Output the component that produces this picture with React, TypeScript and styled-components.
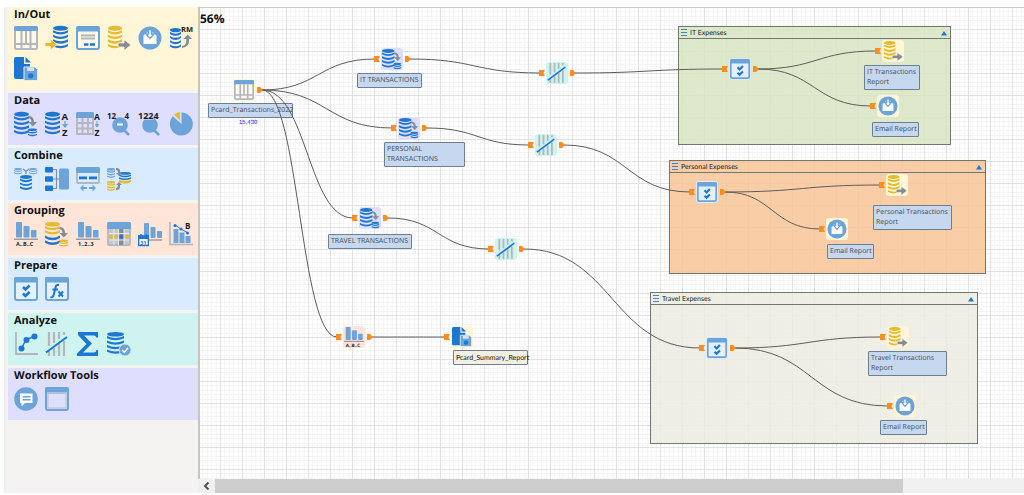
import React from "react";
import styled, { createGlobalStyle } from "styled-components";

const BLUE = "#1d76d2";
const LIGHT = "#6ca3d9";
const GOLD = "#e6ba28";
const SILVER = "#b3b6be";
const STEEL = "#878a97";
const INK = "#1c1c1c";

const GlobalStyle = createGlobalStyle`
  * { box-sizing: border-box; }
  body {
    margin: 0;
    background: #fff;
    font-family: "Open Sans", "Noto Sans", sans-serif;
    text-rendering: geometricPrecision;
  }
`;

const Shell = styled.div`
  display: flex;
  min-height: 100vh;
  padding: 7px 0 2px 4px;
`;

const Palette = styled.aside`
  flex: none;
  width: 194px;
  display: flex;
  flex-direction: column;
  gap: 3px;
  padding-left: 2px;
  border-left: 2px solid #efeff0;
  background: #f4f3f1;
`;

const Section = styled.section<{ $tint: string }>`
  padding: 0 4px 9px 6px;
  background: ${(p) => p.$tint};
`;

const SectionTitle = styled.h2`
  margin: 0;
  padding-bottom: 3px;
  font-size: 11px;
  line-height: 16px;
  font-weight: 700;
  color: #111;
`;

const ToolRow = styled.div`
  display: flex;
  flex-wrap: wrap;
  gap: 7px;
`;

const ToolButton = styled.button`
  display: block;
  width: 24px;
  height: 24px;
  padding: 0;
  border: 0;
  background: none;
`;

const Workspace = styled.main`
  flex: 1;
  min-width: 0;
  display: flex;
  flex-direction: column;
`;

const Canvas = styled.div`
  position: relative;
  flex: 1;
  overflow: hidden;
  border-top: 1px solid #cfccc5;
  border-left: 2px solid #c9c5bc;
  background: #fff;
`;

const Backdrop = styled.svg`
  position: absolute;
  inset: 0;
  width: 100%;
  height: 100%;
`;

const Zoom = styled.output`
  position: relative;
  display: block;
  padding-top: 3px;
  font-size: 12px;
  line-height: 16px;
  font-weight: 700;
  color: #111;
`;

const Frame = styled.section<{ $x: number; $y: number; $w: number; $h: number; $tint: string }>`
  position: absolute;
  left: ${(p) => p.$x}px;
  top: ${(p) => p.$y}px;
  width: ${(p) => p.$w}px;
  height: ${(p) => p.$h}px;
  border: 1px solid #74776f;
  background: ${(p) => p.$tint};
`;

const FrameHeader = styled.header`
  display: flex;
  align-items: center;
  gap: 3px;
  height: 12px;
  padding: 0 2px;
  border-bottom: 1px solid #74776f;
`;

const FrameTitle = styled.h3`
  flex: 1;
  margin: 0;
  font-family: Lato, sans-serif;
  font-size: 7px;
  line-height: 10px;
  font-weight: 400;
  color: #222;
`;

const CollapseButton = styled.button`
  display: block;
  width: 8px;
  height: 8px;
  padding: 0;
  border: 0;
  background: none;
`;

const NodeBox = styled.div<{ $x: number; $y: number }>`
  position: absolute;
  left: ${(p) => p.$x}px;
  top: ${(p) => p.$y}px;
  display: flex;
  align-items: center;
`;

const Port = styled.span`
  display: block;
  width: 6px;
  height: 6px;
`;

const Tile = styled.span<{ $tint: string }>`
  display: block;
  width: 22px;
  height: 22px;
  margin: 0 2px 0 1px;
  padding: 1px;
  border-radius: 3px;
  background: ${(p) => p.$tint};
`;

const Caption = styled.div<{ $x: number; $y: number; $w: number; $plain?: boolean }>`
  position: absolute;
  left: ${(p) => p.$x}px;
  top: ${(p) => p.$y}px;
  width: ${(p) => p.$w}px;
  padding: 2px 0 1px 2px;
  border: 1px solid #6f7f90;
  border-radius: 1px;
  background: ${(p) => (p.$plain ? "#efefe3" : "#c5d8f0")};
  color: ${(p) => (p.$plain ? "#111" : "#484d53")};
  font-family: ${(p) => (p.$plain ? "Lato" : '"Open Sans"')}, sans-serif;
  font-size: 7px;
  line-height: 10px;
  white-space: pre;
`;

const RowCount = styled.div<{ $x: number; $y: number }>`
  position: absolute;
  left: ${(p) => p.$x}px;
  top: ${(p) => p.$y}px;
  font-family: "Liberation Sans", sans-serif;
  font-size: 6px;
  line-height: 8px;
  color: #1010ff;
`;

const ScrollBar = styled.div`
  display: flex;
  height: 14px;
  background: #f0f0f0;
`;

const ScrollButton = styled.button`
  display: flex;
  align-items: center;
  justify-content: center;
  width: 17px;
  padding: 0;
  border: 0;
  background: none;
`;

const ScrollTrack = styled.div`
  flex: 1;
`;

const ScrollThumb = styled.div`
  width: 85%;
  height: 100%;
  background: #cdcdcd;
`;

const Glyph = styled.svg`
  display: block;
  width: 100%;
  height: 100%;
  overflow: visible;
`;

type StackProps = { x: number; y: number; w: number; n: number; color: string; step?: number };

const Stack = ({ x, y, w, n, color, step = 4.4 }: StackProps) => {
  const t = step * 0.5;
  const c = step * 0.55;
  return (
    <g fill={color}>
      <ellipse cx={x + w / 2} cy={y + c * 0.9} rx={w / 2} ry={c * 0.95} />
      {Array.from({ length: n }, (_, i) => {
        const top = y + step * (i + 0.9);
        return (
          <path key={i} d={`M${x} ${top}q${w / 2} ${c * 1.6} ${w} 0v${t}q${-w / 2} ${c * 1.6} ${-w} 0z`} />
        );
      })}
    </g>
  );
};

const Bars = ({ x = 2, y = 0 }: { x?: number; y?: number }) => (
  <g fill={LIGHT} transform={`translate(${x} ${y})`}>
    <rect width="6" height="15.500" rx="1" />
    <rect x="7.500" y="4" width="6" height="11.500" rx="1" />
    <rect x="15" y="8" width="5.500" height="7.500" rx="1" />
  </g>
);

const WindowFrame = ({ fill = "none" }: { fill?: string }) => (
  <>
    <rect x="1" y="1" width="22" height="22" rx="2" fill={fill} stroke={LIGHT} strokeWidth="2" />
    <path d="M0 5.500V2q0-2 2-2h20q2 0 2 2v3.500z" fill={LIGHT} />
  </>
);

const letters = { fontFamily: "Open Sans, sans-serif", fontWeight: 700, fill: INK };

const icons: Record<string, React.ReactNode> = {
  table: (
    <>
      <rect x="1" y="2" width="22" height="21" rx="1.500" fill="#ffffff66" stroke={SILVER} strokeWidth="2" />
      <path d="M7.500 5v13M12 5v13M16.500 5v13M1 18h22M7.500 18v5M16.500 18v5" stroke={SILVER} strokeWidth="2" />
      <path d="M0 5V1.500Q0 0 1.500 0h21Q24 0 24 1.500V5z" fill={LIGHT} />
    </>
  ),
  dbIn: (
    <>
      <Stack x={8} y={0} w={15} n={4} color={BLUE} step={4.6} />
      <path d="M0 16.500h5.500V13l6.500 5.500L5.500 24v-3.500H0z" fill={GOLD} stroke="#fff5d9" strokeWidth=".8" />
    </>
  ),
  form: (
    <>
      <rect x="1" y="1" width="22" height="22" rx="2" fill="#ffffff55" stroke={LIGHT} strokeWidth="2" />
      <path d="M0 5.500V2q0-2 2-2h20q2 0 2 2v3.500z" fill={LIGHT} />
      <path d="M5 9.500h14M5 12.500h14" stroke={SILVER} strokeWidth="1.800" />
      <path d="M8 18.500h4.500M14 18.500h5" stroke={BLUE} strokeWidth="2.400" />
    </>
  ),
  dbOut: (
    <>
      <Stack x={1} y={0} w={14} n={4} color={GOLD} step={4.6} />
      <path d="M11 17h6v-3.500l7 5.500-7 5.500V21h-6z" fill={STEEL} stroke="#fff5d9" strokeWidth=".8" />
    </>
  ),
  email: (
    <>
      <circle cx="12" cy="12" r="11.500" fill={LIGHT} />
      <path d="M5.500 9.500L9 6.500h6l3.500 3V18h-13z" fill="#fff" />
      <path d="M10.500 3.500h3v4.500H16l-4 4.500L8 8h2.500z" fill="#fff" stroke={LIGHT} strokeWidth="1.400" />
    </>
  ),
  rm: (
    <>
      <Stack x={1} y={2} w={11} n={4} color={BLUE} step={4.2} />
      <path d="M13 20q5 0 4.200-7h-3l4.500-4.500L23 13h-3q.8 8-7 9z" fill={STEEL} />
      <text x="12" y="5.500" fontSize="7.500" {...letters}>RM</text>
    </>
  ),
  report: (
    <>
      <path d="M0 2q0-2 2-2h8v7h6v15H2q-2 0-2-2z" fill={BLUE} />
      <path d="M11.500 0v5.500H17z" fill={BLUE} />
      <path d="M10 10h11l2.500 2.500V23.500H10z" fill={LIGHT} stroke="#e8efe9" strokeWidth="1" />
      <rect x="13" y="10.500" width="7" height="3.500" fill="#d5e4ee" />
      <circle cx="16.800" cy="18.800" r="2.600" fill={BLUE} />
    </>
  ),
  dbMove: (
    <>
      <Stack x={0} y={0} w={15} n={4} color={BLUE} step={4.6} />
      <path d="M15 4q5 .5 5 6h3l-4.200 4.500L14.500 10h3q0-3.500-3-4z" fill={STEEL} />
      <Stack x={14} y={16.500} w={9} n={2} color={BLUE} step={2.700} />
    </>
  ),
  dbSort: (
    <>
      <Stack x={0} y={0} w={15} n={4} color={BLUE} step={4.600} />
      <text x="16.500" y="8" fontSize="9.500" {...letters}>A</text>
      <text x="17" y="24" fontSize="9.500" {...letters}>Z</text>
      <path d="M20 9v4M18 12.500l2 2.500 2-2.500z" fill={LIGHT} stroke={LIGHT} strokeWidth="1.200" />
    </>
  ),
  tableSort: (
    <>
      <path d="M1 5v17h16V5M1 11h16M1 16.500h16M6.500 5v17M12 5v17" fill="none" stroke={SILVER} strokeWidth="1.800" />
      <path d="M0 6V1.500Q0 0 1.500 0h15Q18 0 18 1.500V6z" fill={LIGHT} />
      <text x="18" y="8" fontSize="8.500" {...letters}>A</text>
      <text x="18.500" y="24" fontSize="8.500" {...letters}>Z</text>
      <path d="M21 9v4M19.500 12.500l1.500 2.500 1.500-2.500z" fill={LIGHT} stroke={LIGHT} />
    </>
  ),
  gaps: (
    <>
      <path d="M17 18l5 5" stroke={LIGHT} strokeWidth="2.500" />
      <circle cx="13" cy="13" r="7.800" fill={LIGHT} />
      <path d="M10 12.500h6" stroke="#fff" strokeWidth="2" />
      <text x="0" y="6.500" fontSize="8" {...letters}>12</text>
      <text x="17.500" y="6.500" fontSize="8" {...letters}>4</text>
    </>
  ),
  duplicates: (
    <>
      <path d="M16 18l5 5" stroke={LIGHT} strokeWidth="2.500" />
      <circle cx="12" cy="13" r="7.800" fill={LIGHT} />
      <text x="0" y="7" fontSize="9" stroke="#dedeff" strokeWidth="1" paintOrder="stroke" {...letters}>1224</text>
    </>
  ),
  pie: (
    <>
      <path d="M12.500 0.500A11.500 11.500 0 1 1 3.800 4.300L12.500 12z" fill={LIGHT} />
      <path d="M5 2.500Q8 0 11 0v8.500z" fill={GOLD} />
    </>
  ),
  join: (
    <>
      <Stack x={0} y={1} w={8} n={2} color={LIGHT} step={2.200} />
      <Stack x={15} y={1} w={8} n={2} color={LIGHT} step={2.200} />
      <path d="M9 2l3 2.500L15 2M12 4.500V7" fill="none" stroke={STEEL} strokeWidth="1.200" />
      <Stack x={6} y={8} w={12} n={3} color={BLUE} step={3.900} />
    </>
  ),
  append: (
    <>
      <path d="M6 2.500h5.500v19H6M6 12h9" fill="none" stroke={STEEL} strokeWidth="1.200" />
      <g fill={BLUE}>
        <rect width="8" height="5.500" rx="1" />
        <rect y="9.300" width="8" height="5.500" rx="1" />
        <rect y="18.500" width="8" height="5.500" rx="1" />
      </g>
      <rect x="14" y="1.500" width="10" height="21" rx="1.500" fill={LIGHT} />
    </>
  ),
  relate: (
    <>
      <rect x="1" y="1" width="22" height="15" rx="1" fill="none" stroke={SILVER} strokeWidth="1.800" />
      <path d="M0 6V1.500Q0 0 1.500 0h21Q24 0 24 1.500V6z" fill={LIGHT} />
      <path d="M3 10.800h8M13 10.800h8" stroke={BLUE} strokeWidth="2.800" />
      <path d="M4 21l3.500-3.500v2.500H11v2H7.500v2.500zM20 21l-3.500-3.500v2.500H13v2h3.500v2.500z" fill={LIGHT} />
    </>
  ),
  merge: (
    <>
      <Stack x={0} y={1} w={8} n={3} color={LIGHT} step={2.600} />
      <Stack x={0} y={14} w={8} n={3} color={GOLD} step={2.600} />
      <Stack x={12} y={5} w={12} n={2} color={BLUE} step={2.800} />
      <path d="M12 12.500q6 3 12 0v2.500q-6 3-12 0z" fill={GOLD} />
      <path d="M9 1q5 0 4 5h2l-3 3-3-3h2q0-3-2-3zM9 23q5 0 4-5h2l-3-3-3 3h2q0 3-2 3z" fill={STEEL} />
    </>
  ),
  groupAbc: (
    <>
      <Bars />
      <path d="M0 17.200h24" stroke={STEEL} strokeWidth="1.200" />
      <text x="2" y="23.500" fontSize="5.500" {...letters}>A..B..C</text>
    </>
  ),
  groupDb: (
    <>
      <Stack x={0} y={0} w={15} n={2} color={GOLD} step={4.400} />
      <path d="M0 13.500q7.500 4.500 15 0v2.400q-7.500 4.500-15 0zM0 18.300q7.500 4.500 15 0v2.400q-7.500 4.500-15 0z" fill={BLUE} />
      <path d="M15 5q5 .5 5 6h3l-4.200 4.500L14.500 11h3q0-3.500-3-4z" fill={STEEL} />
      <Stack x={14} y={17.500} w={9} n={2} color={GOLD} step={2.500} />
    </>
  ),
  group123: (
    <>
      <Bars />
      <path d="M0 17.200h24" stroke={STEEL} strokeWidth="1.200" />
      <text x="2" y="23.500" fontSize="5.500" {...letters}>1..2..3</text>
    </>
  ),
  pivot: (
    <>
      <rect x="1" y="1" width="22" height="22" rx="1" fill="#c3c6cb" stroke={SILVER} strokeWidth="1.800" />
      <rect x="11.500" y="6" width="5.500" height="17" fill={STEEL} />
      <path d="M2 11.500h20M2 18h20M6.800 6v17M11.500 6v17M17 6v17" stroke="#eee" strokeWidth=".9" />
      <path d="M0 7V1.500Q0 0 1.500 0h21Q24 0 24 1.500V7z" fill={LIGHT} />
      <g fill={GOLD}>
        <circle cx="4" cy="14.800" r="2" />
        <circle cx="9.200" cy="14.800" r="2" />
        <circle cx="20" cy="14.800" r="2" />
      </g>
      <circle cx="14.300" cy="14.800" r="2" fill={BLUE} />
    </>
  ),
  groupDate: (
    <>
      <g transform="translate(6 1)" fill={LIGHT}>
        <rect width="5" height="15" rx="1" />
        <rect x="6.500" y="4" width="5" height="11" rx="1" />
        <rect x="13" y="8" width="5" height="7" rx="1" />
      </g>
      <path d="M11 18h13" stroke={STEEL} strokeWidth="1.200" />
      <rect x=".7" y="14" width="9.600" height="9.500" fill="#fff" stroke={BLUE} strokeWidth="1.400" />
      <path d="M0 13.500h11V17H0z" fill={BLUE} />
      <path d="M3 12v2M8 12v2" stroke={BLUE} strokeWidth="1.400" />
      <text x="2.200" y="22.500" fontSize="5.500" {...letters} fill={BLUE}>31</text>
    </>
  ),
  benford: (
    <>
      <path d="M1 0v22.500h23" fill="none" stroke={SILVER} strokeWidth="1.600" />
      <g fill={LIGHT}>
        <rect x="4.500" y="7" width="5" height="14" />
        <rect x="10.500" y="10.500" width="5" height="10.500" />
        <rect x="16.500" y="14" width="5" height="7" />
      </g>
      <path d="M6 3l6 4 7 4" fill="none" stroke={BLUE} />
      <g fill={BLUE}>
        <circle cx="6" cy="3.500" r="1.500" />
        <circle cx="12" cy="7" r="1.500" />
        <circle cx="18.500" cy="11" r="1.500" />
      </g>
      <text x="16" y="6.500" fontSize="8" {...letters}>B</text>
    </>
  ),
  check: (
    <>
      <WindowFrame fill="#e3f0fd" />
      <path d="M9 10l2.500 2.500L15.500 8.500M9 16.500l2.500 2.500L15.500 15" fill="none" stroke={BLUE} strokeWidth="2.600" />
    </>
  ),
  formula: (
    <>
      <WindowFrame fill="#e3f0fd" />
      <path d="M5.500 20q2.500.8 3.300-2.500l1.700-7Q11.300 7.300 14 8M7.500 12.500h5.500" fill="none" stroke={BLUE} strokeWidth="2" />
      <path d="M13.500 14.500l4.500 5M18 14.500l-4.500 5" stroke={BLUE} strokeWidth="2" />
    </>
  ),
  trend: (
    <>
      <path d="M2 0v22h22" fill="none" stroke={SILVER} strokeWidth="1.800" />
      <path d="M7.500 16.500l4.500-9 8.500-3" fill="none" stroke={BLUE} strokeWidth="1.400" />
      <g fill={BLUE}>
        <circle cx="7.500" cy="16.500" r="3" />
        <circle cx="12.500" cy="8" r="3" />
        <circle cx="20.500" cy="4.500" r="3" />
      </g>
    </>
  ),
  sample: (
    <>
      <path d="M4 0v14M4 19v5M9 0v11M9 16v8M14 0v7M14 12v12M19 0v3M19 9v15" stroke={SILVER} strokeWidth="2.200" />
      <path d="M1 20.500L22 5" stroke={BLUE} strokeWidth="2" />
    </>
  ),
  sum: (
    <path d="M2 0h20v5.500h-1.800q-.4-2-2.200-2H8l8 8-9 9h11q2 0 2.500-2.500H22V24H1v-2.500l9.500-9.500L2 3z" fill={BLUE} />
  ),
  dbCheck: (
    <>
      <Stack x={0} y={0} w={17} n={4} color={BLUE} step={4.500} />
      <circle cx="18" cy="18" r="6" fill={LIGHT} stroke="#d0f3ee" strokeWidth=".8" />
      <path d="M15 18l2.300 2.200L21 16" fill="none" stroke="#fff" strokeWidth="1.500" />
    </>
  ),
  comment: (
    <>
      <circle cx="12" cy="12" r="11.800" fill={LIGHT} />
      <path d="M6 6.500h12.500V16H11l-3.500 3.500V16H6z" fill="#fff" />
      <path d="M8.500 9.800h8M8.500 12.800h8" stroke={LIGHT} strokeWidth="1.400" />
    </>
  ),
  container: (
    <>
      <WindowFrame />
      <rect x="3" y="6.500" width="18" height="14.500" fill="none" stroke={SILVER} strokeWidth=".8" />
    </>
  ),
};

const Icon = ({ name }: { name: string }) => (
  <Glyph viewBox="0 0 24 24" aria-hidden="true">{icons[name]}</Glyph>
);

const sections = [
  { title: "In/Out", tint: "#fff5d7", tools: ["table", "dbIn", "form", "dbOut", "email", "rm", "report"] },
  { title: "Data", tint: "#dedeff", tools: ["dbMove", "dbSort", "tableSort", "gaps", "duplicates", "pie"] },
  { title: "Combine", tint: "#d9ebfe", tools: ["join", "append", "relate", "merge"] },
  { title: "Grouping", tint: "#fee5d8", tools: ["groupAbc", "groupDb", "group123", "pivot", "groupDate", "benford"] },
  { title: "Prepare", tint: "#d9ebfe", tools: ["check", "formula"] },
  { title: "Analyze", tint: "#cff4ef", tools: ["trend", "sample", "sum", "dbCheck"] },
  { title: "Workflow Tools", tint: "#dedeff", tools: ["comment", "container"] },
];

const frames = [
  { title: "IT Expenses", x: 478, y: 18, w: 273, h: 119, tint: "rgba(216, 228, 193, .85)" },
  { title: "Personal Expenses", x: 469, y: 152, w: 317, h: 114, tint: "rgba(248, 197, 152, .85)" },
  { title: "Travel Expenses", x: 450, y: 284, w: 328, h: 152, tint: "rgba(236, 236, 225, .85)" },
];

const tints: Record<string, string> = {
  table: "#fff5d7", dbMove: "#dedeff", sample: "#cff4ef", check: "#d9ebfe",
  dbOut: "#fff5d7", email: "#fff5d7", groupAbc: "#fee5d8", report: "#fff5d7",
};

type NodeSpec = { icon: string; x: number; y: number; input?: boolean; output?: boolean };

/* x and y are the centre of the tile on the canvas */
const nodes: NodeSpec[] = [
  { icon: "table", x: 44, y: 82, output: true },
  { icon: "dbMove", x: 192, y: 51, input: true, output: true },
  { icon: "dbMove", x: 209, y: 120, input: true, output: true },
  { icon: "dbMove", x: 170, y: 210, input: true, output: true },
  { icon: "groupAbc", x: 154, y: 329, input: true, output: true },
  { icon: "report", x: 262, y: 329, input: true },
  { icon: "sample", x: 357, y: 65, input: true, output: true },
  { icon: "sample", x: 346, y: 137, input: true, output: true },
  { icon: "sample", x: 306, y: 241, input: true, output: true },
  { icon: "check", x: 540, y: 61, input: true, output: true },
  { icon: "dbOut", x: 693, y: 43, input: true },
  { icon: "email", x: 688, y: 98, input: true },
  { icon: "check", x: 507, y: 184, input: true, output: true },
  { icon: "dbOut", x: 697, y: 177, input: true },
  { icon: "email", x: 637, y: 221, input: true },
  { icon: "check", x: 517, y: 340, input: true, output: true },
  { icon: "dbOut", x: 698, y: 329, input: true },
  { icon: "email", x: 705, y: 398, input: true },
];

const links: [number, number][] = [
  [0, 1], [0, 2], [0, 3], [0, 4], [1, 6], [2, 7], [3, 8], [4, 5], [6, 9], [7, 12], [8, 15],
  [9, 10], [9, 11], [12, 13], [12, 14], [15, 16], [15, 17],
];

const captions = [
  { text: "Pcard_Transactions_2022", x: 8, y: 95, w: 85 },
  { text: "IT TRANSACTIONS", x: 157, y: 65, w: 65 },
  { text: "PERSONAL\nTRANSACTIONS", x: 184, y: 134, w: 81 },
  { text: "TRAVEL TRANSACTIONS", x: 128, y: 226, w: 84 },
  { text: "Pcard_Summary_Report", x: 253, y: 342, w: 75, plain: true },
  { text: "IT Transactions\nReport", x: 664, y: 57, w: 56 },
  { text: "Email Report", x: 672, y: 114, w: 47 },
  { text: "Personal Transactions\nReport", x: 673, y: 197, w: 79 },
  { text: "Email Report", x: 627, y: 236, w: 47 },
  { text: "Travel Transactions\nReport", x: 668, y: 343, w: 79 },
  { text: "Email Report", x: 680, y: 412, w: 47 },
];

const linkPath = (from: NodeSpec, to: NodeSpec) => {
  const x1 = from.x + 18;
  const x2 = to.x - 17;
  const mid = (x1 + x2) / 2;
  return `M${x1} ${from.y}C${mid} ${from.y} ${mid} ${to.y} ${x2} ${to.y}`;
};

const ToolSection = ({ title, tint, tools }: (typeof sections)[number]) => (
  <Section $tint={tint}>
    <SectionTitle>{title}</SectionTitle>
    <ToolRow>
      {tools.map((tool) => (
        <ToolButton key={tool} type="button" aria-label={tool}>
          <Icon name={tool} />
        </ToolButton>
      ))}
    </ToolRow>
  </Section>
);

const FlowNode = ({ icon, x, y, input, output }: NodeSpec) => (
  <NodeBox $x={x - 18} $y={y - 11}>
    <Port>
      {input && (
        <Glyph viewBox="0 0 6 6"><path d="M0 0h6L4.500 3 6 6H0z" fill="#ff8c1e" /></Glyph>
      )}
    </Port>
    <Tile $tint={tints[icon]}><Icon name={icon} /></Tile>
    <Port>
      {output && (
        <Glyph viewBox="0 0 6 6"><path d="M0 0h3l3 3-3 3H0z" fill="#ff8c1e" /></Glyph>
      )}
    </Port>
  </NodeBox>
);

export default function App() {
  return (
    <>
      <GlobalStyle />
      <Shell>
        <Palette>
          {sections.map((s) => <ToolSection key={s.title} {...s} />)}
        </Palette>
        <Workspace>
          <Canvas>
            <Backdrop aria-hidden="true">
              <defs>
                <pattern id="grid" x="20" y="21" width="22" height="22" patternUnits="userSpaceOnUse">
                  <path d="M4.500 0v22M9.500 0v22M13.500 0v22M18.500 0v22M0 4.500h22M0 9.500h22M0 13.500h22M0 18.500h22" stroke="#f5f5f5" />
                  <path d="M.5 0v22M0 .5h22" stroke="#e2e2e2" />
                </pattern>
              </defs>
              <rect width="100%" height="100%" fill="url(#grid)" />
            </Backdrop>
            <Zoom>56%</Zoom>
            {frames.map((f) => (
              <Frame key={f.title} $x={f.x} $y={f.y} $w={f.w} $h={f.h} $tint={f.tint}>
                <FrameHeader>
                  <svg width="6" height="7" viewBox="0 0 6 7" aria-hidden="true">
                    <path d="M0 .5h6M0 3.500h6M0 6.500h6" stroke="#3f86c9" />
                  </svg>
                  <FrameTitle>{f.title}</FrameTitle>
                  <CollapseButton type="button" aria-label={`Collapse ${f.title}`}>
                    <Glyph viewBox="0 0 8 8"><path d="M1 6.500L4 2l3 4.500z" fill={BLUE} /></Glyph>
                  </CollapseButton>
                </FrameHeader>
              </Frame>
            ))}
            {captions.map((c, i) => (
              <Caption key={i} $x={c.x} $y={c.y} $w={c.w} $plain={c.plain}>{c.text}</Caption>
            ))}
            <RowCount $x={39} $y={111}>15,430</RowCount>
            <Backdrop aria-hidden="true">
              {links.map(([a, b]) => (
                <path key={`${a}-${b}`} d={linkPath(nodes[a], nodes[b])} fill="none" stroke="#5c5c5c" />
              ))}
            </Backdrop>
            {nodes.map((n, i) => <FlowNode key={i} {...n} />)}
          </Canvas>
          <ScrollBar>
            <ScrollButton type="button" aria-label="Scroll left">
              <svg width="7" height="8" viewBox="0 0 7 8" aria-hidden="true">
                <path d="M5.500 .5L2 4l3.500 3.500" fill="none" stroke="#505050" strokeWidth="2" />
              </svg>
            </ScrollButton>
            <ScrollTrack><ScrollThumb /></ScrollTrack>
          </ScrollBar>
        </Workspace>
      </Shell>
    </>
  );
}
